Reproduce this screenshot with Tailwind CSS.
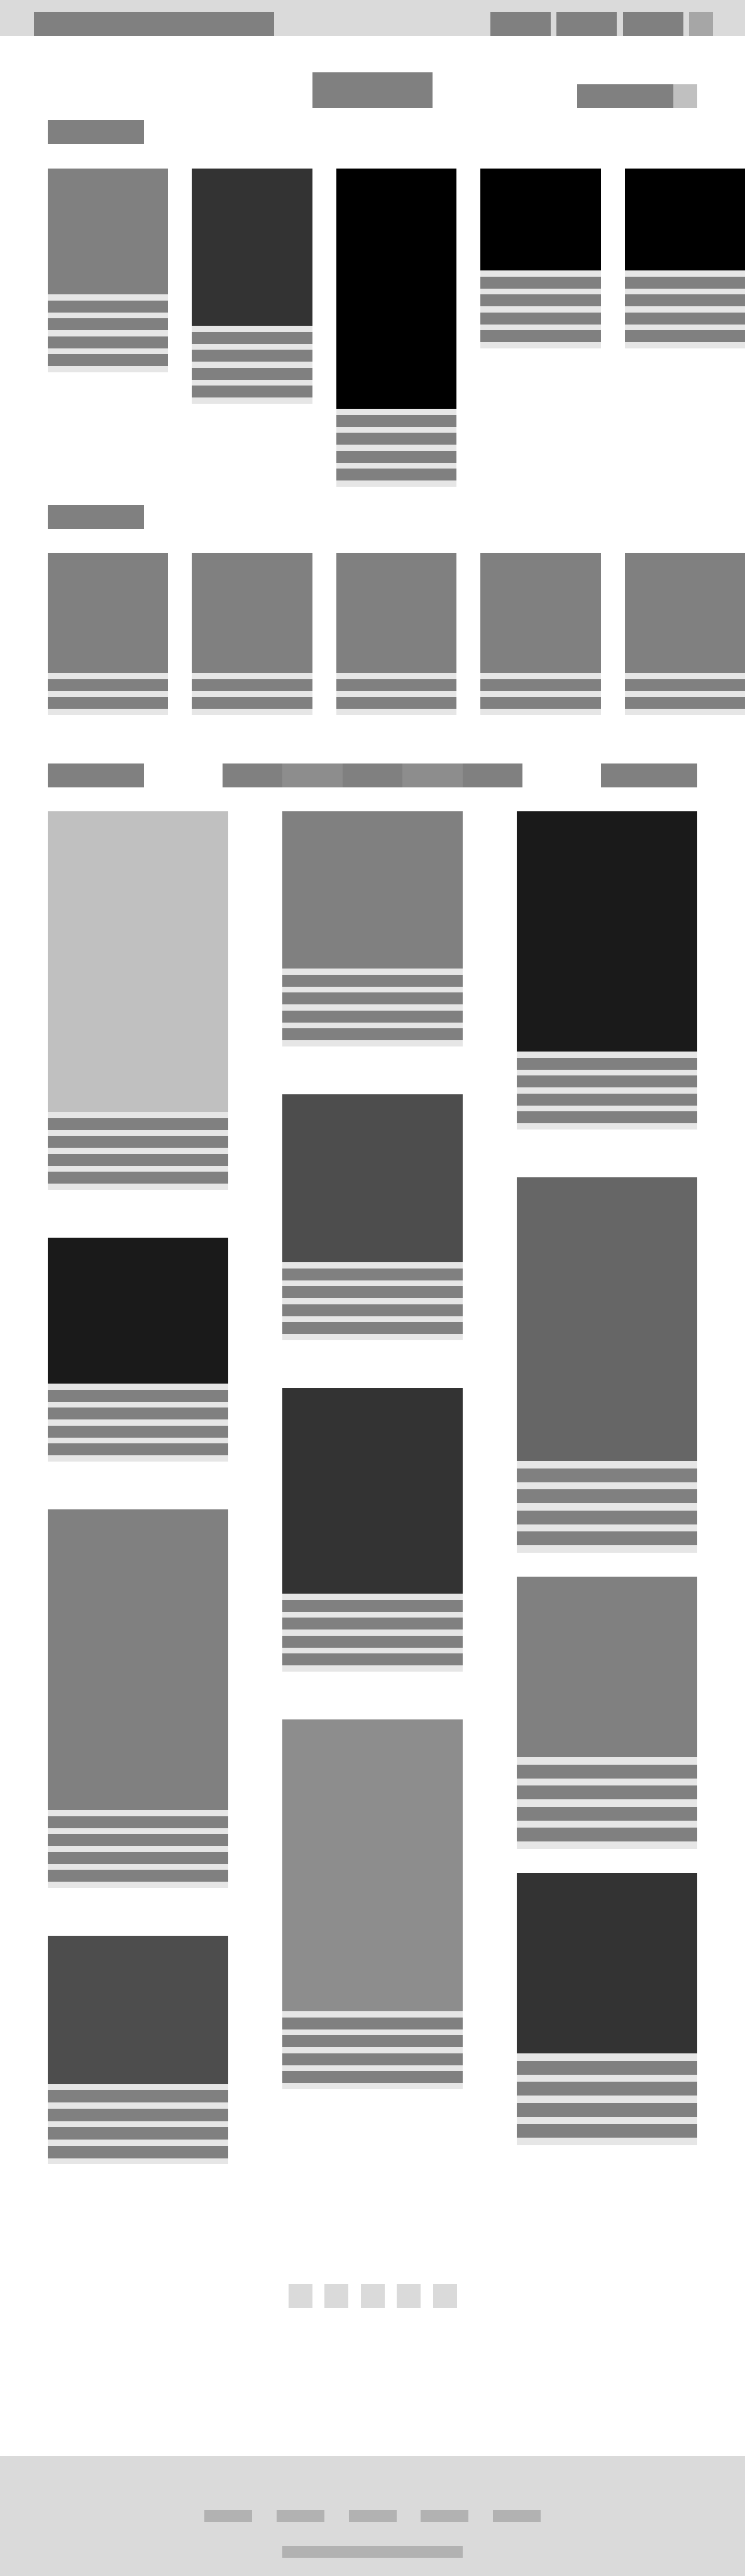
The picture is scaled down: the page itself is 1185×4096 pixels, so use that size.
<!DOCTYPE html>
<html lang="en">
<head>
<meta charset="utf-8">
<meta name="viewport" content="width=device-width, initial-scale=1">
<title>Gallery wireframe</title>
<script src="https://cdn.jsdelivr.net/npm/@tailwindcss/browser@4"></script>
</head>
<body class="bg-white font-['Liberation_Sans',sans-serif]">

<header class="flex items-end justify-between bg-[#dadada] pt-[19px] pr-[51px] pl-[54px]">
  <a href="#" aria-label="Home" class="h-[38px] w-[382px] bg-[#808080]"></a>
  <nav class="flex w-[354px] justify-between">
    <a href="#" aria-label="Menu item 1" class="h-[38px] w-24 bg-[#808080]"></a>
    <a href="#" aria-label="Menu item 2" class="h-[38px] w-24 bg-[#808080]"></a>
    <a href="#" aria-label="Menu item 3" class="h-[38px] w-24 bg-[#808080]"></a>
    <button type="button" aria-label="Account" class="h-[38px] w-[38px] bg-[#a6a6a6]"></button>
  </nav>
</header>

<main>
  <!-- Title and search -->
  <section class="grid grid-cols-[1fr_auto_1fr] items-end px-[76px] pt-[58px]">
    <span></span>
    <h1 class="h-[57px] w-[191px] bg-[#808080]"></h1>
    <form class="flex justify-end">
      <input type="search" aria-label="Search" class="h-[38px] w-[153px] bg-[#808080]">
      <button type="button" aria-label="Submit search" class="h-[38px] w-[38px] bg-[#c0c0c0]"></button>
    </form>
  </section>

  <!-- Featured strip -->
  <section class="pt-[19px] pl-[76px]">
    <h2 class="h-[38px] w-[153px] bg-[#808080]"></h2>
    <div class="grid grid-cols-5 items-start gap-[38px] pt-[39px]">
      <article class="bg-[#e6e6e6]">
        <div class="h-[200px] bg-[#808080]"></div>
        <div class="flex h-[124px] flex-col justify-evenly *:h-[19px] *:bg-[#808080]"><p></p><p></p><p></p><p></p></div>
      </article>
      <article class="bg-[#e6e6e6]">
        <div class="h-[250px] bg-[#333333]"></div>
        <div class="flex h-[124px] flex-col justify-evenly *:h-[19px] *:bg-[#808080]"><p></p><p></p><p></p><p></p></div>
      </article>
      <article class="bg-[#e6e6e6]">
        <div class="h-[382px] bg-black"></div>
        <div class="flex h-[124px] flex-col justify-evenly *:h-[19px] *:bg-[#808080]"><p></p><p></p><p></p><p></p></div>
      </article>
      <article class="bg-[#e6e6e6]">
        <div class="h-[162px] bg-black"></div>
        <div class="flex h-[124px] flex-col justify-evenly *:h-[19px] *:bg-[#808080]"><p></p><p></p><p></p><p></p></div>
      </article>
      <article class="bg-[#e6e6e6]">
        <div class="h-[162px] bg-black"></div>
        <div class="flex h-[124px] flex-col justify-evenly *:h-[19px] *:bg-[#808080]"><p></p><p></p><p></p><p></p></div>
      </article>
    </div>
  </section>

  <!-- Category strip -->
  <section class="pt-[29px] pl-[76px]">
    <h2 class="h-[38px] w-[153px] bg-[#808080]"></h2>
    <div class="grid grid-cols-5 items-start gap-[38px] pt-[38px]">
      <article class="bg-[#e6e6e6]">
        <div class="h-[191px] bg-[#808080]"></div>
        <div class="flex h-[67px] flex-col justify-evenly *:h-[19px] *:bg-[#808080]"><p></p><p></p></div>
      </article>
      <article class="bg-[#e6e6e6]">
        <div class="h-[191px] bg-[#808080]"></div>
        <div class="flex h-[67px] flex-col justify-evenly *:h-[19px] *:bg-[#808080]"><p></p><p></p></div>
      </article>
      <article class="bg-[#e6e6e6]">
        <div class="h-[191px] bg-[#808080]"></div>
        <div class="flex h-[67px] flex-col justify-evenly *:h-[19px] *:bg-[#808080]"><p></p><p></p></div>
      </article>
      <article class="bg-[#e6e6e6]">
        <div class="h-[191px] bg-[#808080]"></div>
        <div class="flex h-[67px] flex-col justify-evenly *:h-[19px] *:bg-[#808080]"><p></p><p></p></div>
      </article>
      <article class="bg-[#e6e6e6]">
        <div class="h-[191px] bg-[#808080]"></div>
        <div class="flex h-[67px] flex-col justify-evenly *:h-[19px] *:bg-[#808080]"><p></p><p></p></div>
      </article>
    </div>
  </section>

  <!-- Filterable gallery -->
  <section class="px-[76px] pt-[77px]">
    <div class="flex justify-between">
      <h2 class="h-[38px] w-[153px] bg-[#808080]"></h2>
      <div class="grid w-[478px] grid-cols-5">
        <button type="button" aria-label="Filter 1" class="h-[38px] bg-[#808080]"></button>
        <button type="button" aria-label="Filter 2" class="h-[38px] bg-[#8d8d8d]"></button>
        <button type="button" aria-label="Filter 3" class="h-[38px] bg-[#808080]"></button>
        <button type="button" aria-label="Filter 4" class="h-[38px] bg-[#8d8d8d]"></button>
        <button type="button" aria-label="Filter 5" class="h-[38px] bg-[#808080]"></button>
      </div>
      <button type="button" aria-label="Sort" class="h-[38px] w-[153px] bg-[#808080]"></button>
    </div>

    <div class="grid grid-cols-3 items-start gap-[86px] pt-[38px]">
      <div class="flex flex-col gap-[76px]">
        <article class="bg-[#e6e6e6]">
          <div class="h-[478px] bg-[#c0c0c0]"></div>
          <div class="flex h-[124px] flex-col justify-evenly *:h-[19px] *:bg-[#808080]"><p></p><p></p><p></p><p></p></div>
        </article>
        <article class="bg-[#e6e6e6]">
          <div class="h-[232px] bg-[#1a1a1a]"></div>
          <div class="flex h-[124px] flex-col justify-evenly *:h-[19px] *:bg-[#808080]"><p></p><p></p><p></p><p></p></div>
        </article>
        <article class="bg-[#e6e6e6]">
          <div class="h-[478px] bg-[#808080]"></div>
          <div class="flex h-[124px] flex-col justify-evenly *:h-[19px] *:bg-[#808080]"><p></p><p></p><p></p><p></p></div>
        </article>
        <article class="bg-[#e6e6e6]">
          <div class="h-[236px] bg-[#4d4d4d]"></div>
          <div class="flex h-[127px] flex-col justify-evenly *:h-5 *:bg-[#808080]"><p></p><p></p><p></p><p></p></div>
        </article>
      </div>

      <div class="flex flex-col gap-[76px]">
        <article class="bg-[#e6e6e6]">
          <div class="h-[250px] bg-[#808080]"></div>
          <div class="flex h-[124px] flex-col justify-evenly *:h-[19px] *:bg-[#808080]"><p></p><p></p><p></p><p></p></div>
        </article>
        <article class="bg-[#e6e6e6]">
          <div class="h-[267px] bg-[#4d4d4d]"></div>
          <div class="flex h-[124px] flex-col justify-evenly *:h-[19px] *:bg-[#808080]"><p></p><p></p><p></p><p></p></div>
        </article>
        <article class="bg-[#e6e6e6]">
          <div class="h-[327px] bg-[#333333]"></div>
          <div class="flex h-[124px] flex-col justify-evenly *:h-[19px] *:bg-[#808080]"><p></p><p></p><p></p><p></p></div>
        </article>
        <article class="bg-[#e6e6e6]">
          <div class="h-[464px] bg-[#8d8d8d]"></div>
          <div class="flex h-[124px] flex-col justify-evenly *:h-[19px] *:bg-[#808080]"><p></p><p></p><p></p><p></p></div>
        </article>
      </div>

      <div class="flex flex-col gap-[38px]">
        <article class="mb-[38px] bg-[#e6e6e6]">
          <div class="h-[382px] bg-[#1a1a1a]"></div>
          <div class="flex h-[124px] flex-col justify-evenly *:h-[19px] *:bg-[#808080]"><p></p><p></p><p></p><p></p></div>
        </article>
        <article class="bg-[#e6e6e6]">
          <div class="h-[451px] bg-[#666666]"></div>
          <div class="flex h-[146px] flex-col justify-evenly *:h-[22px] *:bg-[#808080]"><p></p><p></p><p></p><p></p></div>
        </article>
        <article class="bg-[#e6e6e6]">
          <div class="h-[287px] bg-[#808080]"></div>
          <div class="flex h-[146px] flex-col justify-evenly *:h-[22px] *:bg-[#808080]"><p></p><p></p><p></p><p></p></div>
        </article>
        <article class="bg-[#e6e6e6]">
          <div class="h-[287px] bg-[#333333]"></div>
          <div class="flex h-[146px] flex-col justify-evenly *:h-[22px] *:bg-[#808080]"><p></p><p></p><p></p><p></p></div>
        </article>
      </div>
    </div>
  </section>

  <nav aria-label="Pagination" class="mx-auto flex w-[268px] justify-between pt-[191px] pb-[235px]">
    <a href="#" aria-label="Page 1" class="h-[38px] w-[38px] bg-[#dadada]"></a>
    <a href="#" aria-label="Page 2" class="h-[38px] w-[38px] bg-[#dadada]"></a>
    <a href="#" aria-label="Page 3" class="h-[38px] w-[38px] bg-[#dadada]"></a>
    <a href="#" aria-label="Page 4" class="h-[38px] w-[38px] bg-[#dadada]"></a>
    <a href="#" aria-label="Page 5" class="h-[38px] w-[38px] bg-[#dadada]"></a>
  </nav>
</main>

<footer class="flex flex-col items-center gap-[38px] bg-[#dadada] pt-[86px] pb-[29px]">
  <nav class="flex w-[535px] justify-between">
    <a href="#" aria-label="Footer link 1" class="h-[19px] w-[76px] bg-[#b2b2b2]"></a>
    <a href="#" aria-label="Footer link 2" class="h-[19px] w-[76px] bg-[#b2b2b2]"></a>
    <a href="#" aria-label="Footer link 3" class="h-[19px] w-[76px] bg-[#b2b2b2]"></a>
    <a href="#" aria-label="Footer link 4" class="h-[19px] w-[76px] bg-[#b2b2b2]"></a>
    <a href="#" aria-label="Footer link 5" class="h-[19px] w-[76px] bg-[#b2b2b2]"></a>
  </nav>
  <p class="h-[19px] w-[287px] bg-[#b2b2b2]"></p>
</footer>

</body>
</html>
